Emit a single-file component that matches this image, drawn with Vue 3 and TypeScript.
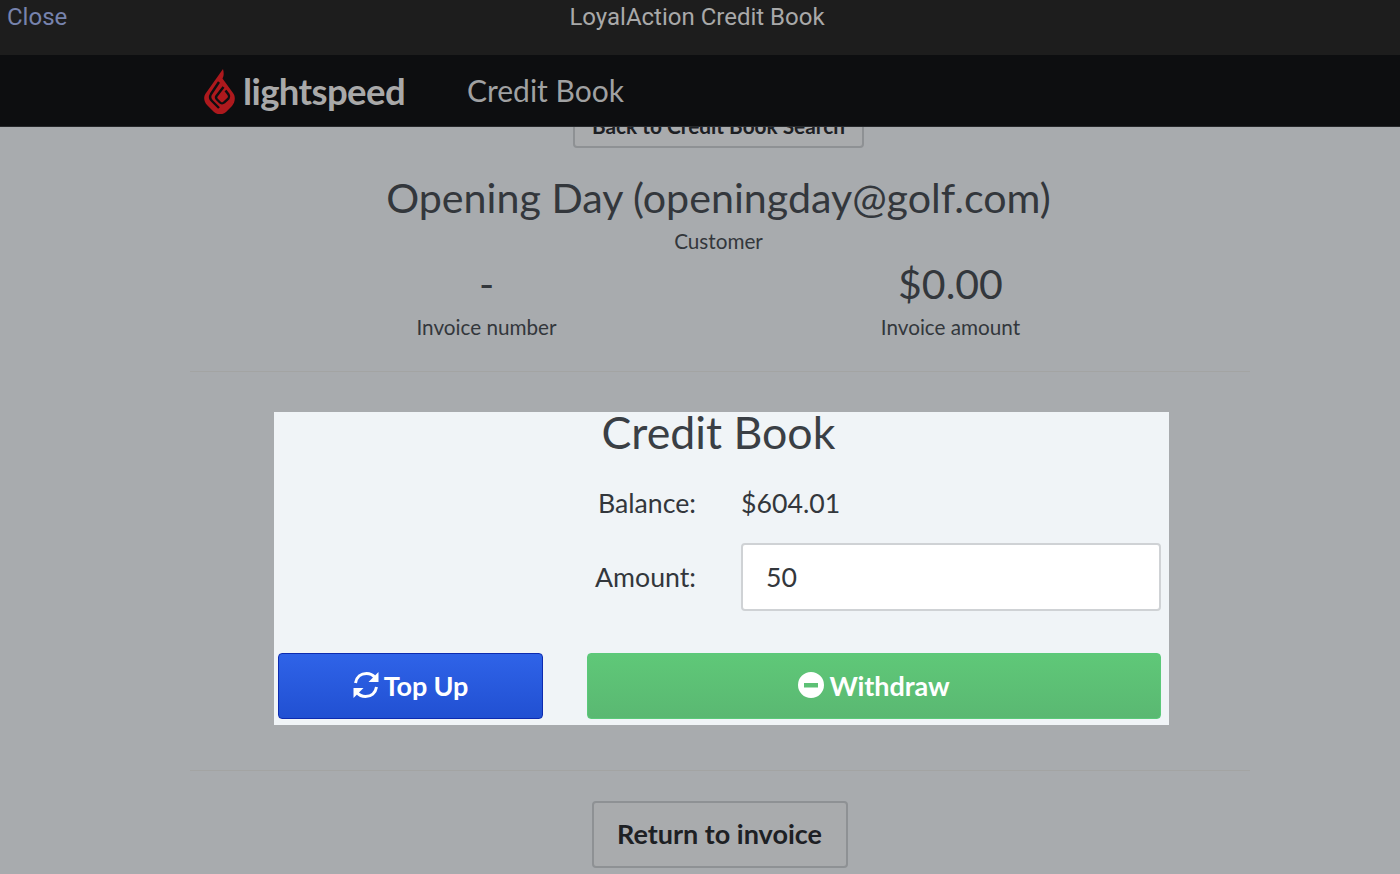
<script setup lang="ts">
const amount = "50";
</script>

<template>
  <div class="page">
    <header class="topbar">
      <a class="close">Close</a>
      <div class="title">LoyalAction Credit Book</div>
    </header>
    <nav class="navbar">
      <svg class="flame" viewBox="0 0 31 45" width="31" height="45">
        <path fill="#ad191d" d="M19 0 C20 4 20 7 18.500 9.500 L29 24 C32 28 31 33 28 37 L22 43 C19 46 13 46 10 43 L3 36 C0 33 -1 28 2 24 Z" />
        <path fill="none" stroke="#0d0e10" stroke-width="2.400" d="M15 13 L7 25 C5.500 27.500 6 30 8 32 L15 39 M19.500 18 L12.500 27 C11.500 28.500 12 29.500 13 30.500 L16 33.500 C17 34.500 19 34.500 20 33.500 L24.500 29.500 C25.500 28 25.500 27 24.500 25.500 L21.500 21.500" />
      </svg>
      <span class="wordmark">lightspeed</span>
      <span class="navlink">Credit Book</span>
    </nav>
    <main class="content">
      <button class="btn btn-back">Back to Credit Book Search</button>
      <h1 class="customer">Opening Day (openingday@golf.com)</h1>
      <div class="caption customer-caption">Customer</div>
      <div class="stats">
        <div class="stat">
          <div class="stat-value">-</div>
          <div class="caption">Invoice number</div>
        </div>
        <div class="stat">
          <div class="stat-value">$0.00</div>
          <div class="caption">Invoice amount</div>
        </div>
      </div>
      <hr class="rule rule-top" />
      <section class="card">
        <h2 class="card-title">Credit Book</h2>
        <div class="form-row balance-row">
          <label>Balance:</label>
          <span>$604.01</span>
        </div>
        <div class="form-row amount-row">
          <label>Amount:</label>
          <input class="amount" :value="amount" />
        </div>
        <div class="actions">
          <button class="action top-up">
            <svg viewBox="0 0 26 28" width="26" height="28">
              <path fill="none" stroke="currentColor" stroke-width="3" d="M2.500 12 C3.500 6 8 2.500 13.500 2.500 C17 2.500 20 4 22 6.500" />
              <path fill="currentColor" d="M25.500 1 V11 H15.500 Z" />
              <path fill="none" stroke="currentColor" stroke-width="3" d="M23.500 16 C22.500 22 18 25.500 12.500 25.500 C9 25.500 6 24 4 21.500" />
              <path fill="currentColor" d="M0.500 27 V17 H10.500 Z" />
            </svg>
            Top Up
          </button>
          <button class="action withdraw">
            <svg viewBox="0 0 26 26" width="26" height="26">
              <path fill="currentColor" fill-rule="evenodd" d="M13 0a13 13 0 1 1 0 26a13 13 0 1 1 0-26zM6 11v4.500h14V11z" />
            </svg>
            Withdraw
          </button>
        </div>
      </section>
      <hr class="rule rule-bottom" />
      <button class="btn btn-return">Return to invoice</button>
    </main>
  </div>
</template>

<style>
html, body {
  margin: 0;
  background: #a8abae;
}
</style>

<style scoped>
.page {
  height: 874px;
  overflow: hidden;
  display: flex;
  flex-direction: column;
  background: #a8abae;
  font-family: Lato, "Liberation Sans", sans-serif;
  color: #33373c;
}

.topbar {
  position: relative;
  z-index: 2;
  height: 55px;
  flex: none;
  background: #1d1d1d;
  font-family: Roboto, "Liberation Sans", sans-serif;
  font-size: 24px;
  line-height: 35px;
}

.close {
  position: absolute;
  left: 7px;
  top: 0;
  color: #7783ad;
}

.title {
  text-align: center;
  padding-right: 6px;
  color: #a9a9a9;
}

.navbar {
  position: relative;
  z-index: 2;
  height: 72px;
  flex: none;
  box-sizing: border-box;
  display: flex;
  align-items: center;
  padding-left: 204px;
  background: #0d0e10;
  border-bottom: 1px solid #26282b;
}

.flame {
  flex: none;
  margin-top: 1px;
}

.wordmark {
  margin-left: 8px;
  width: 224px;
  font-size: 36.500px;
  font-weight: 700;
  letter-spacing: -0.6px;
  color: #a9a9a9;
}

.navlink {
  padding-bottom: 2px;
  font-size: 30px;
  color: #a0a1a2;
}

.content {
  flex: 1;
  display: flex;
  flex-direction: column;
  align-items: center;
  padding-left: 37px;
}

.btn {
  box-sizing: border-box;
  border: 2px solid #8e9194;
  border-radius: 4px;
  background: #a9abad;
  font-family: inherit;
  font-weight: 700;
  color: #1d2024;
}

.btn-back {
  width: 291px;
  height: 46px;
  margin-top: -25px;
  padding: 0;
  font-size: 20.800px;
  white-space: nowrap;
}

.customer {
  margin: 22px 0 0;
  font-size: 41.200px;
  line-height: 54px;
  font-weight: 400;
}

.caption {
  font-size: 20.700px;
  line-height: 30px;
}

.customer-caption {
  margin-top: 2px;
}

.stats {
  display: grid;
  grid-template-columns: 464px 464px;
  text-align: center;
}

.stat-value {
  margin-bottom: 1px;
  font-size: 41px;
  line-height: 55px;
}

.rule {
  width: 1060px;
  margin: 0;
  border: 0;
  border-top: 1px solid #a3a4a3;
}

.rule-top {
  margin-top: 29px;
  margin-left: 3px;
}

.card {
  box-sizing: border-box;
  width: 895px;
  height: 313px;
  margin: 40px 0 0 6px;
  padding: 0 8px 6px 4px;
  background: #f0f4f7;
  display: flex;
  flex-direction: column;
}

.card-title {
  margin: 0;
  padding-right: 2px;
  text-align: center;
  font-size: 44.700px;
  line-height: 41px;
  font-weight: 400;
  color: #3a3f45;
}

.form-row {
  display: grid;
  grid-template-columns: 418px 420px;
  column-gap: 45px;
  align-items: center;
  font-size: 26.700px;
}

.form-row label {
  text-align: right;
}

.balance-row {
  margin-top: 34px;
  line-height: 32px;
}

.amount-row {
  margin-top: 24px;
}

.amount {
  box-sizing: border-box;
  width: 420px;
  height: 68px;
  padding: 0 23px;
  border: 2px solid #cfd2d5;
  border-radius: 4px;
  background: #fff;
  font-family: inherit;
  font-size: 26.700px;
  color: #33373c;
  outline: none;
}

.actions {
  display: grid;
  grid-template-columns: 265px 574px;
  column-gap: 44px;
  margin-top: 42px;
}

.action {
  box-sizing: border-box;
  height: 66px;
  display: flex;
  align-items: center;
  justify-content: center;
  gap: 5px;
  padding: 0 0 2px;
  border-radius: 4px;
  font-family: inherit;
  font-size: 27px;
  font-weight: 700;
  color: #fff;
}

.top-up {
  border: 1px solid #0d2bb0;
  background: linear-gradient(#2f63e8, #2150d2);
}

.top-up,
.withdraw {
  letter-spacing: -0.1px;
}

.withdraw {
  border: 1px solid #5bc97a;
  background: linear-gradient(#5fc878, #5ab872);
}

.rule-bottom {
  margin-top: 45px;
  margin-left: 3px;
}

.btn-return {
  width: 256px;
  height: 67px;
  margin-top: 30px;
  margin-left: 2px;
  padding: 0 0 2px;
  font-size: 27px;
}
</style>
